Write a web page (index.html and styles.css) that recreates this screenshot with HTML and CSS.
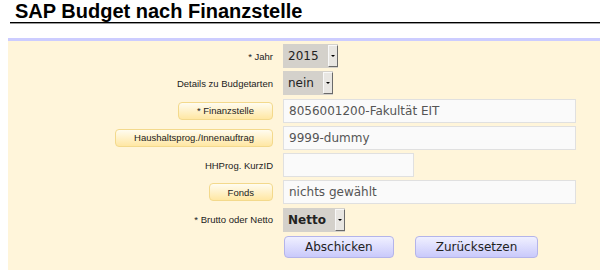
FILE: index.html
```html
<!DOCTYPE html>
<html lang="de">
<head>
  <meta charset="UTF-8">
  <title>SAP Budget nach Finanzstelle</title>
  <link rel="stylesheet" href="styles.css">
</head>
<body>

<h1 class="page-title">SAP Budget nach Finanzstelle</h1>

<!-- Suchformular -->
<form class="panel">
  <div class="form-grid">
    <label class="label">* Jahr</label>
    <div class="field">
      <div class="select"><span class="value">2015</span><span class="arrow"></span></div>
    </div>

    <label class="label">Details zu Budgetarten</label>
    <div class="field">
      <div class="select"><span class="value">nein</span><span class="arrow"></span></div>
    </div>

    <div class="label"><button type="button" class="pick-btn">* Finanzstelle</button></div>
    <div class="field"><div class="text-input wide">8056001200-Fakultät EIT</div></div>

    <div class="label"><button type="button" class="pick-btn">Haushaltsprog./Innenauftrag</button></div>
    <div class="field"><div class="text-input wide">9999-dummy</div></div>

    <label class="label">HHProg. KurzID</label>
    <div class="field"><div class="text-input short"></div></div>

    <div class="label"><button type="button" class="pick-btn">Fonds</button></div>
    <div class="field"><div class="text-input wide">nichts gewählt</div></div>

    <label class="label">* Brutto oder Netto</label>
    <div class="field">
      <div class="select"><span class="value bold">Netto</span><span class="arrow"></span></div>
    </div>

    <div class="label"></div>
    <div class="field actions">
      <button type="button" class="form-btn">Abschicken</button>
      <button type="reset" class="form-btn">Zurücksetzen</button>
    </div>
  </div>
</form>

</body>
</html>
```

FILE: styles.css
```css
body {
  margin: 0;
  padding: 0 0 0 8px;
  background: #fff;
  font-family: "Liberation Sans", Arial, sans-serif;
  color: #222;
}
.page-title {
  margin: 0 0 0 2px;
  padding-left: 5px;
  font-size: 20px;
  line-height: 22px;
  font-weight: bold;
  color: #000;
  border-bottom: 1px solid #000;
  box-shadow: 0 1px 0 #999;
}
.panel {
  margin: 15px 0 0 0;
  padding: 3px 0 20px 0;
  background: #fff5da;
  border-top: 3px solid #ccccff;
}
.form-grid {
  display: grid;
  grid-template-columns: 265px 1fr;
  column-gap: 10px;
  row-gap: 3.3px;
  align-items: center;
}
.label {
  text-align: right;
  font-size: 9.5px;
  color: #222;
}
.field {
  display: flex;
  align-items: center;
  min-height: 24px;
}
.pick-btn {
  font-family: "Liberation Sans", Arial, sans-serif;
  font-size: 9.5px;
  color: #222;
  height: 18px;
  padding: 0 18px;
  border: 1px solid #f3d98c;
  border-radius: 4px;
  background: linear-gradient(#fffcf0, #ffe7a3);
  cursor: pointer;
}
.select {
  display: inline-flex;
  height: 24px;
  background: #d4d1cb;
}
.select .value {
  display: flex;
  align-items: center;
  padding: 0 9px 0 5px;
  font-family: "DejaVu Sans", sans-serif;
  font-size: 12px;
  color: #222;
}
.select .value.bold {
  font-weight: bold;
}
.select .arrow {
  display: flex;
  align-items: center;
  justify-content: center;
  width: 8px;
  margin: 1px 0;
  background: #e8e6e2;
  border: 1px solid;
  border-color: #f8f8f8 #6a6a6a #6a6a6a #f8f8f8;
}
.select .arrow::after {
  content: "";
  border-left: 2px solid transparent;
  border-right: 2px solid transparent;
  border-top: 2px solid #000;
}
.text-input {
  box-sizing: border-box;
  height: 24px;
  padding: 0 5px;
  background: #fafafa;
  border: 1px solid #e0e0e0;
  font-family: "DejaVu Sans", sans-serif;
  font-size: 12px;
  line-height: 22px;
  color: #555;
}
.text-input.wide {
  width: 293px;
}
.text-input.short {
  width: 131px;
}
.actions {
  gap: 21px;
  padding-left: 1px;
}
.form-btn {
  font-family: "DejaVu Sans", sans-serif;
  font-size: 12px;
  color: #222;
  height: 22px;
  padding: 0 20px;
  border: 1px solid #b4b4ea;
  border-radius: 4px;
  background: linear-gradient(#f0f0ff, #c9c9fb);
  cursor: pointer;
}
```
